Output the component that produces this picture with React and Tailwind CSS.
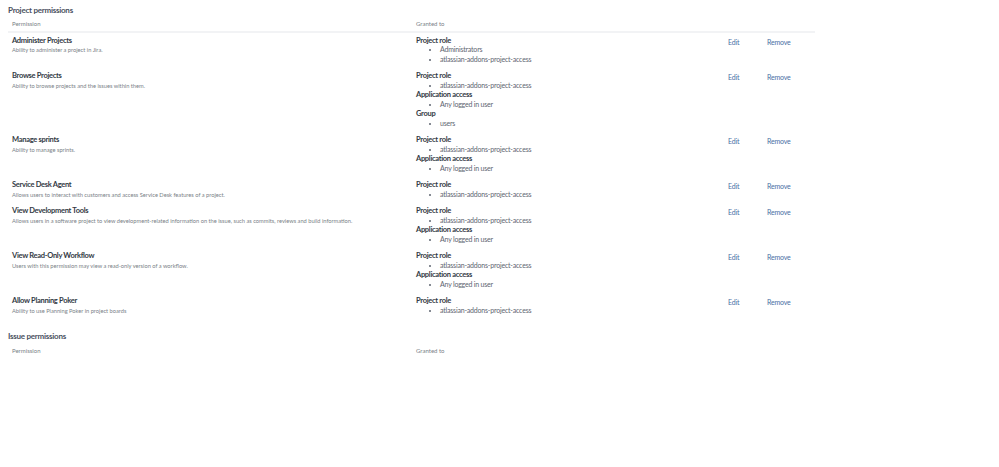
import React from 'react';

const ROLE = 'atlassian-addons-project-access';
const ANY = 'Any logged in user';

const projectPermissions = [
  {
    name: 'Administer Projects',
    desc: 'Ability to administer a project in Jira.',
    grants: [['Project role', ['Administrators', ROLE]]],
  },
  {
    name: 'Browse Projects',
    desc: 'Ability to browse projects and the issues within them.',
    grants: [['Project role', [ROLE]], ['Application access', [ANY]], ['Group', ['users']]],
  },
  {
    name: 'Manage sprints',
    desc: 'Ability to manage sprints.',
    grants: [['Project role', [ROLE]], ['Application access', [ANY]]],
  },
  {
    name: 'Service Desk Agent',
    desc: 'Allows users to interact with customers and access Service Desk features of a project.',
    grants: [['Project role', [ROLE]]],
  },
  {
    name: 'View Development Tools',
    desc: 'Allows users in a software project to view development-related information on the issue, such as commits, reviews and build information.',
    grants: [['Project role', [ROLE]], ['Application access', [ANY]]],
  },
  {
    name: 'View Read-Only Workflow',
    desc: 'Users with this permission may view a read-only version of a workflow.',
    grants: [['Project role', [ROLE]], ['Application access', [ANY]]],
  },
  {
    name: 'Allow Planning Poker',
    desc: 'Ability to use Planning Poker in project boards',
    grants: [['Project role', [ROLE]]],
  },
];

const TableHeader = ({ border }) => (
  <div className={`flex w-[807px] ml-[8px] h-[17px] items-center text-[6px] text-[#7a7f87] ${border ? 'border-b-2 border-[#f2f3f5]' : ''}`}>
    <div className="w-[408px] pl-[4px]">Permission</div>
    <div>Granted to</div>
  </div>
);

const PermissionRow = ({ permission }) => (
  <div className="flex w-[807px] ml-[8px] pt-[3px] pb-[4px]">
    <div className="w-[408px] pl-[4px]">
      <div className="text-[7.5px] tracking-[-0.3px] leading-[9.5px] font-bold text-[#333a45]">{permission.name}</div>
      <div className="text-[5.7px] leading-[9px] text-[#7a7f87] whitespace-nowrap">{permission.desc}</div>
    </div>
    <div className="w-[312px]">
      {permission.grants.map(([label, items]) => (
        <div key={label}>
          <div className="text-[7.5px] tracking-[-0.3px] leading-[9.5px] font-bold text-[#333a45]">{label}</div>
          <ul className="list-disc pl-[24px] text-[7px] tracking-[-0.2px] leading-[9.5px] text-[#5e6570]">
            {items.map((item) => (
              <li key={item}>{item}</li>
            ))}
          </ul>
        </div>
      ))}
    </div>
    <div className="flex text-[7px] tracking-[-0.2px] leading-[9.5px] text-[#4a6fa5] pt-[2px]">
      <a className="w-[39px]">Edit</a>
      <a>Remove</a>
    </div>
  </div>
);

export default function App() {
  return (
    <div className="w-[999px] h-[467px] bg-white overflow-hidden font-['Lato',sans-serif]">
      <h2 className="pl-[8px] pt-[5px] h-[15.7px] text-[8px] tracking-[-0.25px] leading-[11px] font-bold text-[#4a5160]">Project permissions</h2>
      <TableHeader border />
      {projectPermissions.map((permission) => (
        <PermissionRow key={permission.name} permission={permission} />
      ))}
      <h2 className="pl-[8px] pt-[12px] h-[23px] text-[8px] tracking-[-0.25px] leading-[11px] font-bold text-[#4a5160]">Issue permissions</h2>
      <TableHeader />
    </div>
  );
}
